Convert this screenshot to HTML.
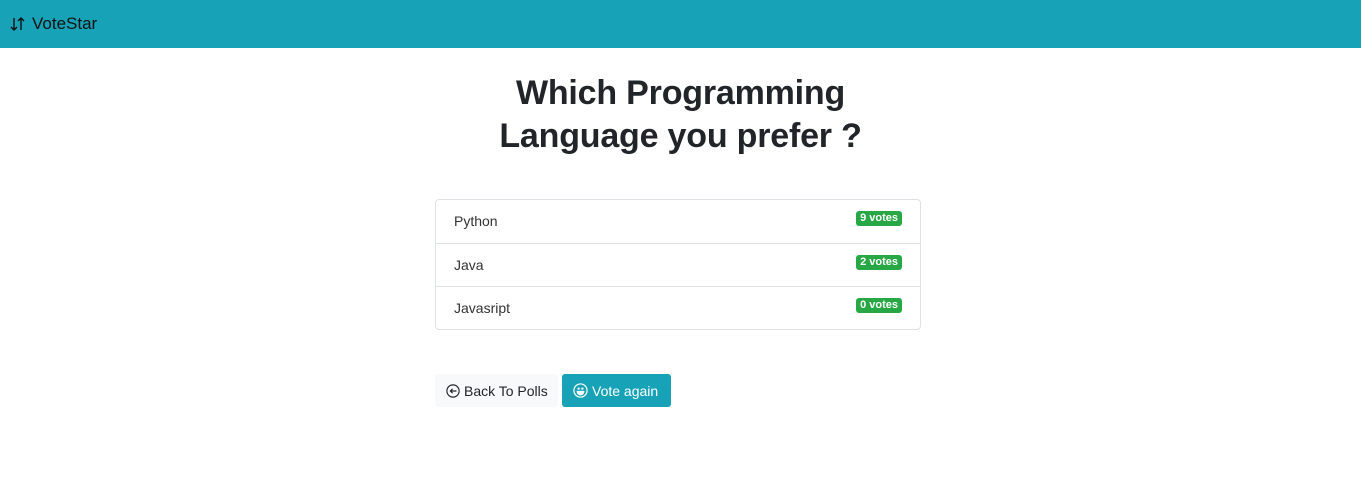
<!DOCTYPE html>
<html><head><meta charset="utf-8"><style>
*{box-sizing:border-box}
body{margin:0;font-family:"Liberation Sans",sans-serif;color:#212529;background:#fff;width:1361px;height:495px;overflow:hidden}
.nav{height:48px;background:#17a2b8;display:flex;align-items:center;padding-left:10px;font-size:17px;color:#111}
.nav svg{margin-right:6px}
h1{margin:0;position:absolute;top:72px;left:0;width:1361px;text-align:center;font-size:34px;font-weight:bold;line-height:43px;color:#212529;letter-spacing:-0.2px}
.list{position:absolute;left:435px;top:199px;width:486px;border:1px solid #dee2e6;border-radius:4px}
.item{height:43px;border-top:1px solid #dee2e6;position:relative;font-size:14px;padding:13px 18px;color:#333}
.item:first-child{border-top:none}
.badge{position:absolute;right:18px;top:11px;background:#28a745;color:#fff;font-size:11px;font-weight:bold;padding:2px 4px;border-radius:3px;line-height:11px}
.btn{position:absolute;top:374px;height:33px;border-radius:3px;font-size:14px;display:flex;align-items:center;padding:0 11px;white-space:nowrap}
.b1{left:435px;width:123px;background:#f8f9fa;color:#212529}
.b2{left:562px;width:109px;background:#17a2b8;color:#fff}
.btn svg{margin-right:4px;flex:none}
</style></head><body>
<div class="nav"><svg width="16" height="16" viewBox="0 0 16 16" fill="none" stroke="#111" stroke-width="1.4"><path d="M4 2v12M1 11l3 3 3-3M11 14V2M8 5l3-3 3 3"/></svg>VoteStar</div>
<h1>Which Programming<br>Language you prefer ?</h1>
<div class="list">
<div class="item">Python<span class="badge">9 votes</span></div>
<div class="item">Java<span class="badge">2 votes</span></div>
<div class="item">Javasript<span class="badge">0 votes</span></div>
</div>
<div class="btn b1"><svg width="14" height="14" viewBox="0 0 16 16" fill="none" stroke="#212529" stroke-width="1.3"><circle cx="8" cy="8" r="7"/><path d="M12 8H5M7.5 5.5L5 8l2.5 2.5"/></svg>Back To Polls</div>
<div class="btn b2"><svg width="15" height="15" viewBox="0 0 16 16" fill="none" stroke="#fff" stroke-width="1.3"><circle cx="8" cy="8" r="7"/><path d="M4.5 9h7a3.5 3.5 0 0 1-7 0z" fill="#fff"/><circle cx="6" cy="6" r=".6" fill="#fff"/><circle cx="10" cy="6" r=".6" fill="#fff"/></svg>Vote again</div>
</body></html>
